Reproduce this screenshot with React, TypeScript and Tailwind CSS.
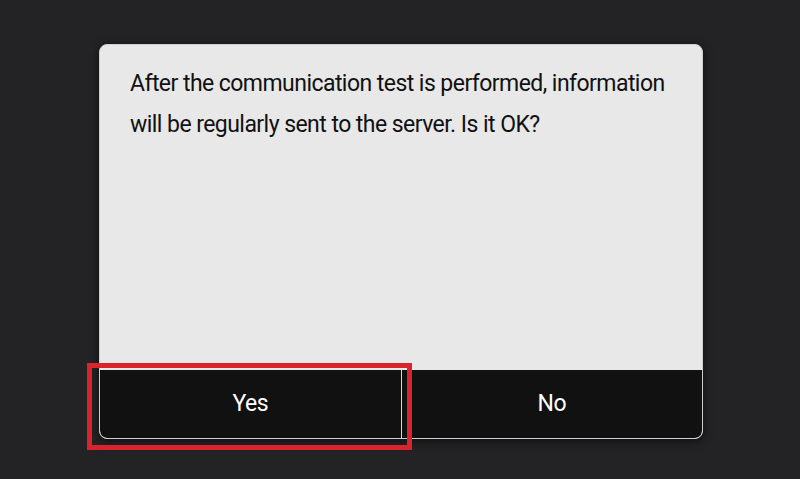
export default function App() {
  return (
    <div className="w-[800px] h-[479px] bg-[#232224] pt-[44px] pl-[99px] relative">
      <div className="w-[604px] h-[395px] bg-[#e8e8e8] rounded-[8px] flex flex-col overflow-hidden border border-[#cfcfcf] shadow-[0_2px_10px_rgba(0,0,0,0.6)]">
        <div className="flex-1 pl-[30px] pr-[10px] pt-[18px]">
          <p
            className="text-[23px] leading-[41px] tracking-[-0.55px] text-[#111] whitespace-nowrap"
            style={{ fontFamily: 'Roboto, sans-serif' }}
          >
            After the communication test is performed, information
            <br />
            will be regularly sent to the server. Is it OK?
          </p>
        </div>
        <div
          className="h-[68px] flex text-white text-[23px] tracking-[-0.55px]"
          style={{ fontFamily: 'Roboto, sans-serif' }}
        >
          <button className="flex-1 bg-[#111111] rounded-bl-[7px] border-r border-[#d8d8d8] flex items-center justify-center">
            Yes
          </button>
          <button className="flex-1 bg-[#111111] rounded-br-[7px] flex items-center justify-center">
            No
          </button>
        </div>
      </div>
      <div className="absolute left-[87px] top-[363px] w-[325px] h-[87px] border-[5px] border-[#d9232d]" />
    </div>
  )
}
